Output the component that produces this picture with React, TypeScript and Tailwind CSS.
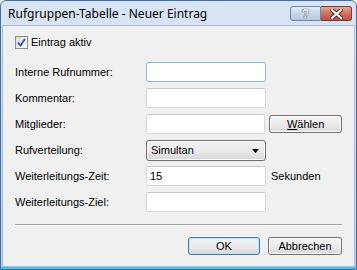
import { ReactNode } from 'react'

const ui = { fontFamily: '"Liberation Sans", Arial, sans-serif' }
const title = { fontFamily: '"Noto Sans", "Open Sans", sans-serif' }

function TextBox({ value = '', focused = false }: { value?: string; focused?: boolean }) {
  return (
    <div
      className={
        'w-[120px] h-[20px] bg-white border rounded-[2px] px-[3px] flex items-center text-[11px] text-black ' +
        (focused ? 'border-[#8fb8e6]' : 'border-[#d5d9de] border-t-[#c4c8cd]')
      }
    >
      {value}
    </div>
  )
}

function Button({ children, primary = false, className = '' }: { children: ReactNode; primary?: boolean; className?: string }) {
  return (
    <div
      className={
        'h-[18px] rounded-[3px] border flex items-center justify-center text-[11px] text-black bg-gradient-to-b from-[#f4f4f4] via-[#ebebeb] to-[#d9d9d9] ' +
        (primary ? 'border-[#3c7fb1] shadow-[inset_0_0_0_1px_#b9e0f5]' : 'border-[#707070] shadow-[inset_0_0_0_1px_#fbfbfb]') +
        ' ' +
        className
      }
    >
      {children}
    </div>
  )
}

function Row({ label, children }: { label: string; children: ReactNode }) {
  return (
    <div className="flex items-start h-[26px]">
      <div className="w-[131px] h-[20px] flex items-center text-[11px] text-black">{label}</div>
      {children}
    </div>
  )
}

export default function App() {
  return (
    <div className="w-[357px] h-[270px] bg-white" style={ui}>
      <div className="w-[357px] h-[270px] flex flex-col rounded-t-[6px] border border-[#3d6fa8] bg-gradient-to-b from-[#d9e5f4] to-[#bcd0ea] overflow-hidden">
        <div className="h-[24px] flex items-center pl-[7px] pr-[4px] shrink-0">
          <div className="text-[12px] text-black flex-1 pt-[1px]" style={title}>
            Rufgruppen-Tabelle - Neuer Eintrag
          </div>
          <div className="flex mt-[1px]">
            <div className="w-[31px] h-[15px] rounded-l-[3px] border border-[#6d87a8] bg-gradient-to-b from-[#e4ecf6] via-[#c8d6e8] to-[#b6c7de] flex items-center justify-center">
              <span className="text-[12px] font-bold text-white leading-none [text-shadow:0_0_1px_#333,0_0_1px_#333]">?</span>
            </div>
            <div className="w-[31px] h-[15px] rounded-r-[3px] border border-l-0 border-[#7a3a32] bg-gradient-to-b from-[#e8a493] via-[#d2705e] to-[#c44f3b] flex items-center justify-center">
              <svg width="13" height="10" viewBox="0 0 13 10">
                <path d="M2 1 L11 9 M11 1 L2 9" stroke="#4a2a28" strokeWidth="4" strokeLinecap="square" />
                <path d="M2 1 L11 9 M11 1 L2 9" stroke="#ffffff" strokeWidth="2.2" strokeLinecap="square" />
              </svg>
            </div>
          </div>
        </div>
        <div className="flex-1 mx-[1px] mb-[2px] border border-[#a8bdd6] bg-[#f0f0f0] pl-[12px] pr-[12px] pt-[10px] flex flex-col">
          <div className="flex items-center h-[13px] gap-[3px] text-[11px] text-black">
            <div className="w-[13px] h-[13px] border border-[#8e8f8f] bg-gradient-to-br from-[#dcdcdc] to-[#fbfbfb] flex items-center justify-center">
              <svg width="9" height="9" viewBox="0 0 9 9">
                <path d="M1 4.5 L3.5 7.5 L8 1" stroke="#3b54a6" strokeWidth="1.8" fill="none" />
              </svg>
            </div>
            <span>Eintrag aktiv</span>
          </div>
          <div className="mt-[13px] flex flex-col">
            <Row label="Interne Rufnummer:">
              <TextBox focused />
            </Row>
            <Row label="Kommentar:">
              <TextBox />
            </Row>
            <Row label="Mitglieder:">
              <TextBox />
              <Button className="ml-[4px] mt-[1px] w-[73px]">
                <span className="underline">W</span>ählen
              </Button>
            </Row>
            <Row label="Rufverteilung:">
              <div className="w-[120px] h-[21px] rounded-[3px] border border-[#707070] bg-gradient-to-b from-[#f2f2f2] via-[#ebebeb] to-[#d7d7d7] shadow-[inset_0_0_0_1px_#fbfbfb] flex items-center pl-[4px] pr-[6px] text-[11px] text-black">
                <span className="flex-1">Simultan</span>
                <svg width="7" height="4" viewBox="0 0 7 4">
                  <path d="M0 0 H7 L3.5 4 Z" fill="#000" />
                </svg>
              </div>
            </Row>
            <Row label="Weiterleitungs-Zeit:">
              <TextBox value="15" />
              <div className="ml-[5px] h-[20px] flex items-center text-[11px] text-black">Sekunden</div>
            </Row>
            <Row label="Weiterleitungs-Ziel:">
              <TextBox />
            </Row>
          </div>
          <div className="mt-[6px] h-[2px] border-t border-[#a0a0a0] border-b border-b-white" />
          <div className="mt-[11px] flex justify-end gap-[8px]">
            <Button primary className="w-[72px]">OK</Button>
            <Button className="w-[74px]">Abbrechen</Button>
          </div>
        </div>
        <div className="h-[2px] bg-[#3ec3ea] shrink-0 -mt-[2px]" />
      </div>
    </div>
  )
}
